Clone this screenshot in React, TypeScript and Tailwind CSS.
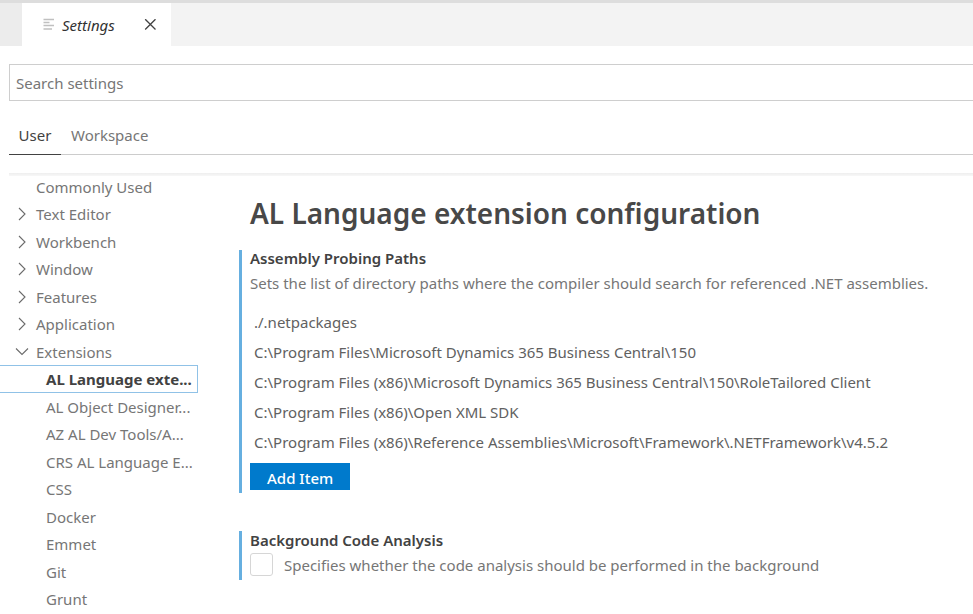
type TreeEntry = {
  label: string;
  kind: "plain" | "closed" | "open" | "child";
  selected?: boolean;
};

const entries: TreeEntry[] = [
  { label: "Commonly Used", kind: "plain" },
  { label: "Text Editor", kind: "closed" },
  { label: "Workbench", kind: "closed" },
  { label: "Window", kind: "closed" },
  { label: "Features", kind: "closed" },
  { label: "Application", kind: "closed" },
  { label: "Extensions", kind: "open" },
  { label: "AL Language exte...", kind: "child", selected: true },
  { label: "AL Object Designer...", kind: "child" },
  { label: "AZ AL Dev Tools/A...", kind: "child" },
  { label: "CRS AL Language E...", kind: "child" },
  { label: "CSS", kind: "child" },
  { label: "Docker", kind: "child" },
  { label: "Emmet", kind: "child" },
  { label: "Git", kind: "child" },
  { label: "Grunt", kind: "child" },
];

const paths = [
  "./.netpackages",
  "C:\\Program Files\\Microsoft Dynamics 365 Business Central\\150",
  "C:\\Program Files (x86)\\Microsoft Dynamics 365 Business Central\\150\\RoleTailored Client",
  "C:\\Program Files (x86)\\Open XML SDK",
  "C:\\Program Files (x86)\\Reference Assemblies\\Microsoft\\Framework\\.NETFramework\\v4.5.2",
];

function Chevron({ open }: { open: boolean }) {
  return (
    <svg width="14" height="14" viewBox="0 0 14 14" fill="none" stroke="#6b6b6b" strokeWidth="1.1" aria-hidden="true">
      <path d={open ? "M1 3.5 7 9.5 13 3.5" : "M4 1 10 7 4 13"} />
    </svg>
  );
}

function TreeRow({ entry }: { entry: TreeEntry }) {
  const expandable = entry.kind === "closed" || entry.kind === "open";
  return (
    <li className="h-[27px] even:h-7">
      <button
        type="button"
        aria-expanded={expandable ? entry.kind === "open" : undefined}
        className={
          entry.selected
            ? "flex h-full w-full items-center border border-l-0 border-[#90c2e7] pl-[46px] text-left font-bold text-[#424242]"
            : entry.kind === "child"
              ? "flex h-full w-full items-center pl-[46px] text-left"
              : "flex h-full w-full items-center pl-[15px] text-left"
        }
      >
        {entry.kind !== "child" && (
          <span className="w-[21px] shrink-0">{expandable && <Chevron open={entry.kind === "open"} />}</span>
        )}
        <span className="whitespace-nowrap">{entry.label}</span>
      </button>
    </li>
  );
}

export default function App() {
  return (
    <div className="h-screen overflow-hidden bg-white font-['Noto_Sans','Open_Sans',sans-serif] text-[15px] leading-5 text-[#767676]">
      <header className="flex h-[46px] border-t-[3px] border-[#dddddd] bg-[#f3f3f3]">
        <div className="w-[22px] bg-[#ececec]" />
        <div className="flex w-[149px] items-center bg-white pr-3 pl-5 text-[#333333]">
          <svg width="13" height="13" viewBox="0 0 13 13" stroke="#c0c0c0" strokeWidth="1.3" fill="none" aria-hidden="true">
            <path d="M1.5 1.5h10.5M1.5 4.5h6M1.5 7.5h10.5M1.5 11h8.5" />
          </svg>
          <span className="ml-[7px] italic">Settings</span>
          <button type="button" aria-label="Close settings" className="ml-auto p-[3px]">
            <svg width="12" height="12" viewBox="0 0 12 12" stroke="#424242" strokeWidth="1.3" fill="none">
              <path d="M1.2.2l10.3 10.3M11.5.2 1.2 10.5" />
            </svg>
          </button>
        </div>
      </header>

      <div className="pt-[18px] pl-[9px]">
        <input
          type="text"
          aria-label="Search settings"
          placeholder="Search settings"
          className="block h-[37px] w-full border border-r-0 border-[#cecece] px-1.5 outline-none placeholder:text-[#767676]"
        />
        <nav className="mt-4 flex h-[38px] border-b border-[#cccccc]">
          <button type="button" className="-mb-px w-[52px] border-b border-[#424242] pb-px text-center text-[#424242]">
            User
          </button>
          <button type="button" className="px-2.5 pb-px">
            Workspace
          </button>
        </nav>
        <div className="mt-[18px] h-[3px] bg-linear-to-b from-[#eeeeee] to-[#f8f8f8]" />
      </div>

      <div className="-mt-[3px] flex">
        <ul className="w-[198px] shrink-0">
          {entries.map((entry) => (
            <TreeRow key={entry.label} entry={entry} />
          ))}
        </ul>

        <main className="min-w-0 flex-1 pt-5 pl-[41px]">
          <h1 className="pl-[11px] text-[28px] leading-10 font-semibold text-[#484848]">
            AL Language extension configuration
          </h1>

          <section className="mt-[17px] border-l-[3px] border-[#66afe0] pb-[3px] pl-2">
            <h2 className="leading-4 font-semibold text-[#424242]">Assembly Probing Paths</h2>
            <p className="mt-[7px]">Sets the list of directory paths where the compiler should search for referenced .NET assemblies.</p>
            <ul className="mt-3.5 pl-1 leading-[30px] text-[#616161]">
              {paths.map((path) => (
                <li key={path}>{path}</li>
              ))}
            </ul>
            <button type="button" className="mt-1.5 block h-[27px] bg-[#007acc] px-[17px] pt-0.5 font-medium text-white">
              Add Item
            </button>
          </section>

          <section className="mt-[38px] border-l-[3px] border-[#66afe0] pb-1 pl-2">
            <h2 className="leading-[18px] font-semibold text-[#424242]">Background Code Analysis</h2>
            <label className="mt-1 flex items-center gap-[11px]">
              <input
                type="checkbox"
                className="size-[23px] appearance-none rounded-[3px] border border-[#d6d6d6] bg-white checked:bg-[#007acc]"
              />
              <span>Specifies whether the code analysis should be performed in the background</span>
            </label>
          </section>
        </main>
      </div>
    </div>
  );
}
